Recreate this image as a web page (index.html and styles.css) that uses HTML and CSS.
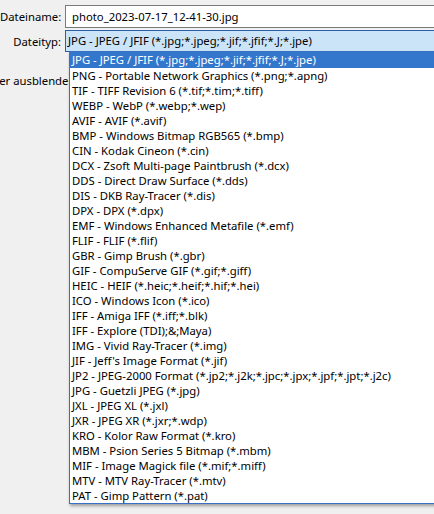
FILE: index.html
```html
<!DOCTYPE html>
<html lang="de">
<head>
    <meta charset="UTF-8">
    <meta name="viewport" content="width=device-width, initial-scale=1.0">
    <title>Speichern unter</title>
    <link rel="stylesheet" href="styles.css">
</head>
<body>
    <div class="dialog">
        <div class="row">
            <label class="label" for="fileName">Dateiname:</label>
            <div class="field" id="fileName">photo_2023-07-17_12-41-30.jpg</div>
        </div>
        <div class="row">
            <label class="label">Dateityp:</label>
            <div class="combo">JPG - JPEG / JFIF (*.jpg;*.jpeg;*.jif;*.jfif;*.J;*.jpe)</div>
        </div>
        <div class="row hide-row">
            <span class="hide-label">Ordner ausblenden</span>
        </div>

        <ul class="dropdown">
            <li class="item selected">JPG - JPEG / JFIF (*.jpg;*.jpeg;*.jif;*.jfif;*.J;*.jpe)</li>
            <li class="item">PNG - Portable Network Graphics (*.png;*.apng)</li>
            <li class="item">TIF - TIFF Revision 6 (*.tif;*.tim;*.tiff)</li>
            <li class="item">WEBP - WebP (*.webp;*.wep)</li>
            <li class="item">AVIF - AVIF (*.avif)</li>
            <li class="item">BMP - Windows Bitmap RGB565 (*.bmp)</li>
            <li class="item">CIN - Kodak Cineon (*.cin)</li>
            <li class="item">DCX - Zsoft Multi-page Paintbrush (*.dcx)</li>
            <li class="item">DDS - Direct Draw Surface (*.dds)</li>
            <li class="item">DIS - DKB Ray-Tracer (*.dis)</li>
            <li class="item">DPX - DPX (*.dpx)</li>
            <li class="item">EMF - Windows Enhanced Metafile (*.emf)</li>
            <li class="item">FLIF - FLIF (*.flif)</li>
            <li class="item">GBR - Gimp Brush (*.gbr)</li>
            <li class="item">GIF - CompuServe GIF (*.gif;*.giff)</li>
            <li class="item">HEIC - HEIF (*.heic;*.heif;*.hif;*.hei)</li>
            <li class="item">ICO - Windows Icon (*.ico)</li>
            <li class="item">IFF - Amiga IFF (*.iff;*.blk)</li>
            <li class="item">IFF - Explore (TDI);&amp;;Maya)</li>
            <li class="item">IMG - Vivid Ray-Tracer (*.img)</li>
            <li class="item">JIF - Jeff's Image Format (*.jif)</li>
            <li class="item">JP2 - JPEG-2000 Format (*.jp2;*.j2k;*.jpc;*.jpx;*.jpf;*.jpt;*.j2c)</li>
            <li class="item">JPG - Guetzli JPEG (*.jpg)</li>
            <li class="item">JXL - JPEG XL (*.jxl)</li>
            <li class="item">JXR - JPEG XR (*.jxr;*.wdp)</li>
            <li class="item">KRO - Kolor Raw Format (*.kro)</li>
            <li class="item">MBM - Psion Series 5 Bitmap (*.mbm)</li>
            <li class="item">MIF - Image Magick file (*.mif;*.miff)</li>
            <li class="item">MTV - MTV Ray-Tracer (*.mtv)</li>
            <li class="item">PAT - Gimp Pattern (*.pat)</li>
        </ul>
    </div>
</body>
</html>
```

FILE: styles.css
```css
html {
    overflow: hidden;
}
body {
    margin: 0;
    padding: 0;
    background-color: #f0f0f0;
    color: #000;
    font-family: "Noto Sans", "Liberation Sans", sans-serif;
    font-size: 11.3px;
}
.dialog {
    position: relative;
    width: 520px;
    height: 514px;
    padding-top: 5px;
    box-sizing: border-box;
}
.row {
    display: flex;
    align-items: center;
    margin-bottom: 2px;
}
.label {
    width: 65px;
    padding-right: 4px;
    text-align: right;
    box-sizing: border-box;
    white-space: nowrap;
}
.field {
    flex: 1;
    height: 23px;
    line-height: 21px;
    padding-left: 6px;
    background: #fff;
    border: 1px solid #7a7a7a;
    box-sizing: border-box;
}
.combo {
    flex: 1;
    height: 22px;
    line-height: 20px;
    padding-left: 2px;
    background: #cce4f7;
    border: 1px solid #2d5fa6;
    box-sizing: border-box;
    white-space: nowrap;
}
.hide-row {
    height: 24px;
    margin-top: 16px;
    margin-left: -28px;
}
.hide-label {
    white-space: nowrap;
}

/* open list of the file type combo */
.dropdown {
    position: absolute;
    top: 51px;
    left: 69px;
    width: 440px;
    margin: 0;
    padding: 0;
    list-style: none;
    background: #fff;
    border: 1px solid #3a70c4;
    box-shadow: 1px 2px 3px rgba(0, 0, 0, 0.35);
}
.item {
    height: 15px;
    line-height: 15px;
    padding-left: 2px;
    white-space: nowrap;
}
.item.selected {
    height: 16px;
    line-height: 16px;
    background: #3377cc;
    color: #fff;
}
```
